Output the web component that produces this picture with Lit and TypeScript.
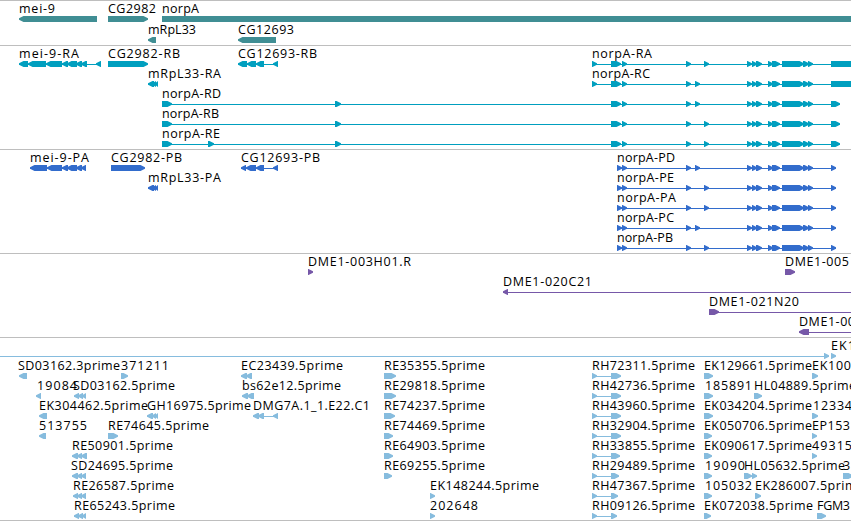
import { LitElement, css, html, svg } from 'lit'
import { customElement, property } from 'lit/decorators.js'

type Span = [number, number]

interface Feature {
  row: number;
  label: string;
  /** Left edge of the label. */
  x: number;
  /** Drawn width of the label. */
  width: number;
  /** 1 points right, -1 points left. */
  strand: 1 | -1;
  exons: Span[];
  /** Extent of the connecting line, when it is longer than the exons. */
  line?: Span;
}

interface Track {
  color: string;
  height: number;
  pitch: number;
  features: Feature[];
}

const VIEW_WIDTH = 851
const HEAD = 4.5

function feature(
  row: number,
  label: string,
  x: number,
  end: number,
  strand: 1 | -1,
  exons: Span[],
  line?: Span
): Feature {
  return { row, label, x, width: end - x, strand, exons, line }
}

// Exons shared by all of the norpA transcripts
const norpaMiddle: Span[] = [
  [747, 752], [752, 757], [756, 762], [768, 773], [772, 780],
  [782, 804], [803, 809], [808, 813],
]

function norpa(start: Span[], alternate: number, end: Span): Span[] {
  return [...start, [686, 691], [alternate, alternate + 5], ...norpaMiddle, end]
}

const rnaStart: Span[] = [[611, 621], [622, 627]]
const proteinStart: Span[] = [[617, 622], [622, 627]]

const genes: Track = {
  color: '#408e94',
  height: 45,
  pitch: 21,
  features: [
    feature(0, 'mei-9', 19, 55, -1, [[19, 97]]),
    feature(0, 'CG2982', 108, 156, 1, [[108, 148]]),
    feature(0, 'norpA', 162, 199, 1, [[162, 900]]),
    feature(1, 'mRpL33', 148, 196, -1, [[148, 156]]),
    feature(1, 'CG12693', 238, 294, -1, [[238, 276]]),
  ],
}

const transcripts: Track = {
  color: '#009fbf',
  height: 104,
  pitch: 20,
  features: [
    feature(0, 'mei-9-RA', 19, 79, -1, [
      [19, 28], [28, 46], [46, 62], [62, 68], [67, 77], [76, 82], [81, 87], [96, 101],
    ]),
    feature(0, 'CG2982-RB', 108, 180, 1, [[108, 148]]),
    feature(0, 'CG12693-RB', 238, 317, -1, [[238, 247], [247, 256], [256, 264], [273, 278]]),
    feature(0, 'norpA-RA', 592, 652, 1, norpa([[592, 597], ...rnaStart], 704, [831, 880])),
    feature(1, 'mRpL33-RA', 148, 221, -1, [[148, 154], [152, 156], [155, 158]]),
    feature(1, 'norpA-RC', 592, 650, 1, norpa([[592, 597], ...rnaStart], 695, [831, 880])),
    feature(2, 'norpA-RD', 162, 221, 1, norpa([[162, 172], [335, 341], ...rnaStart], 695, [831, 840])),
    feature(3, 'norpA-RB', 162, 219, 1, norpa([[162, 172], [335, 341], ...rnaStart], 704, [831, 840])),
    feature(4, 'norpA-RE', 162, 220, 1, norpa([[162, 172], [208, 214], [335, 341], ...rnaStart], 704, [831, 840])),
  ],
}

const proteins: Track = {
  color: '#326ccc',
  height: 104,
  pitch: 20,
  features: [
    feature(0, 'mei-9-PA', 30, 89, -1, [[30, 47], [47, 62], [62, 68], [67, 77], [76, 82], [81, 86]]),
    feature(0, 'CG2982-PB', 111, 182, 1, [[111, 145]]),
    feature(0, 'CG12693-PB', 241, 320, -1, [[241, 246], [246, 256], [256, 264], [273, 278]]),
    feature(1, 'mRpL33-PA', 148, 221, -1, [[148, 154], [152, 156], [155, 158]]),
    feature(0, 'norpA-PD', 617, 675, 1, norpa(proteinStart, 695, [831, 836])),
    feature(1, 'norpA-PE', 617, 674, 1, norpa(proteinStart, 704, [831, 836])),
    feature(2, 'norpA-PA', 617, 676, 1, norpa(proteinStart, 704, [831, 836])),
    feature(3, 'norpA-PC', 617, 674, 1, norpa(proteinStart, 695, [831, 836])),
    feature(4, 'norpA-PB', 617, 673, 1, norpa(proteinStart, 704, [831, 836])),
  ],
}

const clones: Track = {
  color: '#7658a8',
  height: 84,
  pitch: 20,
  features: [
    feature(0, 'DME1-003H01.R', 308, 411, 1, [[308, 313]]),
    feature(0, 'DME1-005', 785, 849, 1, [[785, 795]]),
    feature(1, 'DME1-020C21', 503, 592, -1, [[503, 508]], [503, 900]),
    feature(2, 'DME1-021N20', 709, 799, 1, [[709, 719]], [709, 900]),
    feature(3, 'DME1-00', 799, 855, -1, [[799, 809]], [799, 900]),
  ],
}

// [label, right tip of the last exon]
const reReads: [string, number][] = [
  ['RE35355.5prime', 396], ['RE29818.5prime', 396], ['RE74237.5prime', 395],
  ['RE74469.5prime', 393], ['RE64903.5prime', 393], ['RE69255.5prime', 392],
]

const rhReads: [string, number][] = [
  ['RH72311.5prime', 621], ['RH42736.5prime', 621], ['RH43960.5prime', 621],
  ['RH32904.5prime', 621], ['RH33855.5prime', 620], ['RH29489.5prime', 619],
  ['RH47367.5prime', 618], ['RH09126.5prime', 617],
]

const ests: Track = {
  color: '#86bcde',
  height: 183,
  pitch: 20,
  features: [
    feature(0, 'EK1', 831, 855, 1, [[824, 829], [831, 836]], [0, 829]),
    feature(1, 'SD03162.3prime', 18, 120, -1, [[19, 27]]),
    feature(1, '371211', 121, 169, 1, [[121, 128]]),
    feature(1, 'EC23439.5prime', 241, 343, -1, [[241, 247], [246, 252]]),
    feature(1, 'EK129661.5prime', 704, 812, 1, [[704, 713]]),
    feature(1, 'EK100', 812, 851, 1, [[812, 818]]),
    feature(2, '19084', 37, 77, -1, [[36, 41]]),
    feature(2, 'SD03162.5prime', 73, 175, -1, [[74, 79], [78, 83], [82, 86]]),
    feature(2, 'bs62e12.5prime', 242, 341, -1, [[242, 248], [247, 254]]),
    feature(2, '185891', 705, 752, 1, [[704, 713]]),
    feature(2, 'HL04889.5prime', 754, 856, 1, [[754, 762]]),
    feature(3, 'EK304462.5prime', 39, 148, -1, [[39, 47]]),
    feature(3, 'GH16975.5prime', 147, 251, -1, [[147, 153], [152, 156], [155, 158]]),
    feature(3, 'DMG7A.1_1.E22.C1', 253, 370, -1, [[253, 259], [258, 264], [273, 278]]),
    feature(3, 'EK034204.5prime', 704, 812, 1, [[704, 713]]),
    feature(3, '12334', 813, 852, 1, [[812, 818]]),
    feature(4, '513755', 39, 87, -1, [[39, 46]]),
    feature(4, 'RE74645.5prime', 108, 209, 1, [[108, 118]]),
    feature(4, 'EK050706.5prime', 704, 812, 1, [[704, 712]]),
    feature(4, 'EP153', 812, 850, 1, [[812, 817]]),
    feature(5, 'RE50901.5prime', 72, 173, -1, [[72, 78], [77, 82], [81, 87]]),
    feature(5, 'EK090617.5prime', 704, 812, 1, [[704, 712]]),
    feature(5, '49315', 812, 852, 1, [[812, 817]]),
    feature(6, 'SD24695.5prime', 71, 173, -1, [[72, 78], [77, 82], [81, 86]]),
    feature(6, '19090', 705, 745, 1, [[704, 712]]),
    feature(6, 'HL05632.5prime', 744, 845, 1, [[744, 752], [752, 757]]),
    feature(6, '3', 843, 851, 1, [[843, 853]]),
    feature(7, 'RE26587.5prime', 73, 174, -1, [[73, 78], [77, 82], [81, 86]]),
    feature(7, 'EK148244.5prime', 430, 539, 1, [[430, 435]]),
    feature(7, '105032', 705, 752, 1, [[704, 712]]),
    feature(7, 'EK286007.5prime', 755, 864, 1, [[755, 761]]),
    feature(8, 'RE65243.5prime', 74, 175, -1, [[74, 79], [78, 83], [82, 86]]),
    feature(8, '202648', 430, 478, 1, [[430, 435]]),
    feature(8, 'EK072038.5prime', 704, 813, 1, [[704, 711]]),
    feature(8, 'FGM3', 817, 850, 1, [[817, 826]]),
    ...reReads.map(([label, tip], i) => feature(i + 1, label, 384, 485, 1, [[384, tip]])),
    ...rhReads.map(([label, tip], i) => feature(i + 1, label, 592, 695, 1, [[592, 597], [611, tip]])),
  ],
}

/**
 * One horizontal track of genomic features.
 */
@customElement('feature-track')
export class FeatureTrack extends LitElement {
  @property({ attribute: false }) track!: Track

  static styles = css`
    :host {
      display: block;
      border-top: 1px solid #bebebe;
      overflow: hidden;
    }

    svg {
      display: block;
    }

    text {
      font-family: 'Open Sans', 'Noto Sans', sans-serif;
      font-size: 12.5px;
      fill: #000;
    }

    .line {
      shape-rendering: crispEdges;
    }
  `

  render() {
    const { color, height, features } = this.track
    return html`
      <svg width=${VIEW_WIDTH} height=${height - 1} viewBox="0 1 ${VIEW_WIDTH} ${height - 1}">
        <g fill=${color}>${features.map((f) => this._glyph(f))}</g>
        ${features.map((f) => this._label(f))}
      </svg>
    `
  }

  private _glyph(f: Feature) {
    const top = 16 + f.row * this.track.pitch
    const [from, to] = f.line ?? [f.exons[0][0], f.exons[f.exons.length - 1][1]]
    const hasLine = f.line !== undefined || f.exons.length > 1
    return svg`
      ${hasLine
        ? svg`<rect class="line" x=${from} y=${top + 3} width=${to - from} height="1"></rect>`
        : ''}
      ${f.exons.map((exon) => svg`<polygon points=${this._arrow(exon, top, f.strand)}></polygon>`)}
    `
  }

  // Arrow with a slightly blunt tip, so that short exons stay visible
  private _arrow([start, end]: Span, top: number, strand: 1 | -1) {
    const tip = strand === 1 ? end : start
    const back = strand === 1 ? start : end
    const neck = tip - strand * Math.min(HEAD, end - start)
    return [
      [back, top], [neck, top], [tip, top + 2.3],
      [tip, top + 3.7], [neck, top + 6], [back, top + 6],
    ].join(' ')
  }

  private _label(f: Feature) {
    return svg`<text
      x=${f.x}
      y=${13 + f.row * this.track.pitch}
      textLength=${f.width}
    >${f.label}</text>`
  }
}

@customElement('app-root')
export class AppRoot extends LitElement {
  static styles = css`
    :host {
      display: flex;
      flex-direction: column;
      width: 851px;
      height: 521px;
      overflow: hidden;
      background: #fff;
    }

    .end {
      height: 1px;
      background: #bebebe;
    }
  `

  render() {
    return html`
      ${[genes, transcripts, proteins, clones, ests].map(
        (track) => html`<feature-track .track=${track}></feature-track>`
      )}
      <div class="end"></div>
    `
  }
}
